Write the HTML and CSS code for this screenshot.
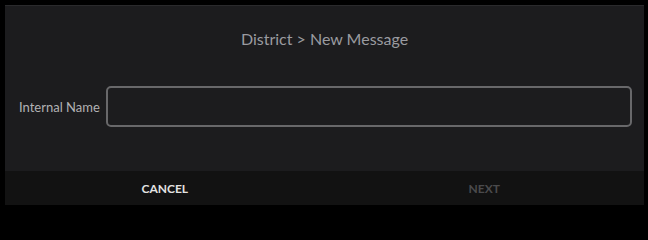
FILE: index.html
```html
<!DOCTYPE html>
<html>
<head>
<meta charset="utf-8">
<link rel="stylesheet" href="styles.css">
</head>
<body>
<div class="dialog">
  <div class="body">
    <div class="title">District &gt; New Message</div>
    <div class="field">
      <label class="label" for="name">Internal Name</label>
      <input class="input" id="name" type="text">
    </div>
  </div>
  <div class="footer">
    <button class="btn cancel">CANCEL</button>
    <button class="btn next">NEXT</button>
  </div>
</div>
</body>
</html>
```
FILE: styles.css
```css
html, body {
  margin: 0;
  padding: 0;
  background: #000;
  height: 100%;
}
body {
  padding: 5px 4px 4px 5px;
  box-sizing: border-box;
  font-family: Lato, "Open Sans", sans-serif;
}
.dialog {
  width: 639px;
  display: flex;
  flex-direction: column;
  background: #1c1c1e;
  border-top: 1px solid #2a2a2c;
}
.body {
  height: 165px;
  display: flex;
  flex-direction: column;
}
.title {
  text-align: center;
  color: #9a9ba0;
  font-size: 16px;
  padding-top: 24px;
  line-height: 18px;
}
.field {
  display: flex;
  align-items: center;
  margin-top: 38px;
  padding-left: 14px;
  padding-right: 12px;
}
.label {
  color: #b2b2b4;
  font-size: 13px;
  width: 87px;
}
.input {
  flex: 1;
  height: 41px;
  box-sizing: border-box;
  background: transparent;
  border: 2px solid #68686a;
  border-radius: 5px;
  outline: none;
}
.footer {
  height: 34px;
  background: #121212;
  display: flex;
}
.btn {
  flex: 1;
  background: transparent;
  border: none;
  font-family: Lato, "Open Sans", sans-serif;
  font-weight: 700;
  font-size: 12px;
  padding: 0;
}
.cancel { color: #e2e2e2; }
.next { color: #4a4a4c; }
```
